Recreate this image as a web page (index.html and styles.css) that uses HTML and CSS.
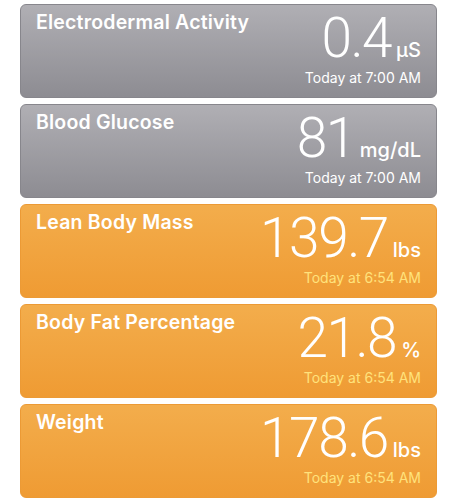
FILE: index.html
```html
<!DOCTYPE html>
<html lang="en">
<head>
  <meta charset="UTF-8" />
  <meta name="viewport" content="width=device-width, initial-scale=1.0"/>
  <title>Health Data</title>
  <link rel="stylesheet" href="styles.css">
</head>
<body>

  <main class="list">
    <div class="card grey">
      <div class="card-title">Electrodermal Activity</div>
      <div class="reading">
        <div class="value-row"><span class="value">0.4</span><span class="unit">µS</span></div>
        <div class="date">Today at 7:00 AM</div>
      </div>
    </div>

    <div class="card grey">
      <div class="card-title">Blood Glucose</div>
      <div class="reading">
        <div class="value-row"><span class="value">81</span><span class="unit">mg/dL</span></div>
        <div class="date">Today at 7:00 AM</div>
      </div>
    </div>

    <div class="card orange">
      <div class="card-title">Lean Body Mass</div>
      <div class="reading">
        <div class="value-row"><span class="value">139.7</span><span class="unit">lbs</span></div>
        <div class="date">Today at 6:54 AM</div>
      </div>
    </div>

    <div class="card orange">
      <div class="card-title">Body Fat Percentage</div>
      <div class="reading">
        <div class="value-row"><span class="value">21.8</span><span class="unit">%</span></div>
        <div class="date">Today at 6:54 AM</div>
      </div>
    </div>

    <div class="card orange">
      <div class="card-title">Weight</div>
      <div class="reading">
        <div class="value-row"><span class="value">178.6</span><span class="unit">lbs</span></div>
        <div class="date">Today at 6:54 AM</div>
      </div>
    </div>
  </main>

</body>
</html>
```

FILE: styles.css
```css
:root {
  --grey-top: #b0afb4;
  --grey-bottom: #8d8c92;
  --orange-top: #f3ad4c;
  --orange-bottom: #ef9b33;
  --date-orange: #ffe27c;
}

body {
  margin: 0;
  background: #fff;
  font-family: "Inter", "Roboto", sans-serif;
  color: #fff;
}

.list {
  display: flex;
  flex-direction: column;
  gap: 6px;
  padding: 4px 20px 0 20px;
}

.card {
  height: 94px;
  box-sizing: border-box;
  border-radius: 6px;
  padding: 5px 15px 0 15px;
  display: flex;
  justify-content: space-between;
  align-items: flex-start;
}

.grey {
  background: linear-gradient(to bottom, var(--grey-top), var(--grey-bottom));
  border: 1px solid #87868c;
}

.orange {
  background: linear-gradient(to bottom, var(--orange-top), var(--orange-bottom));
  border: 1px solid #ec9a35;
}

.card-title {
  font-size: 19.5px;
  font-weight: 600;
  line-height: 24px;
  letter-spacing: 0.2px;
}

.reading {
  display: flex;
  flex-direction: column;
  align-items: flex-end;
}

.value-row {
  display: flex;
  align-items: baseline;
  height: 48px;
  margin-top: 4px;
}

.value {
  font-family: "Roboto", sans-serif;
  font-size: 55px;
  font-weight: 300;
  line-height: 48px;
  letter-spacing: -1.5px;
}

.unit {
  font-size: 20px;
  font-weight: 500;
  margin-left: 5px;
}

.date {
  font-size: 14px;
  line-height: 17px;
  margin-top: 7px;
}

.orange .date {
  color: var(--date-orange);
}
```
